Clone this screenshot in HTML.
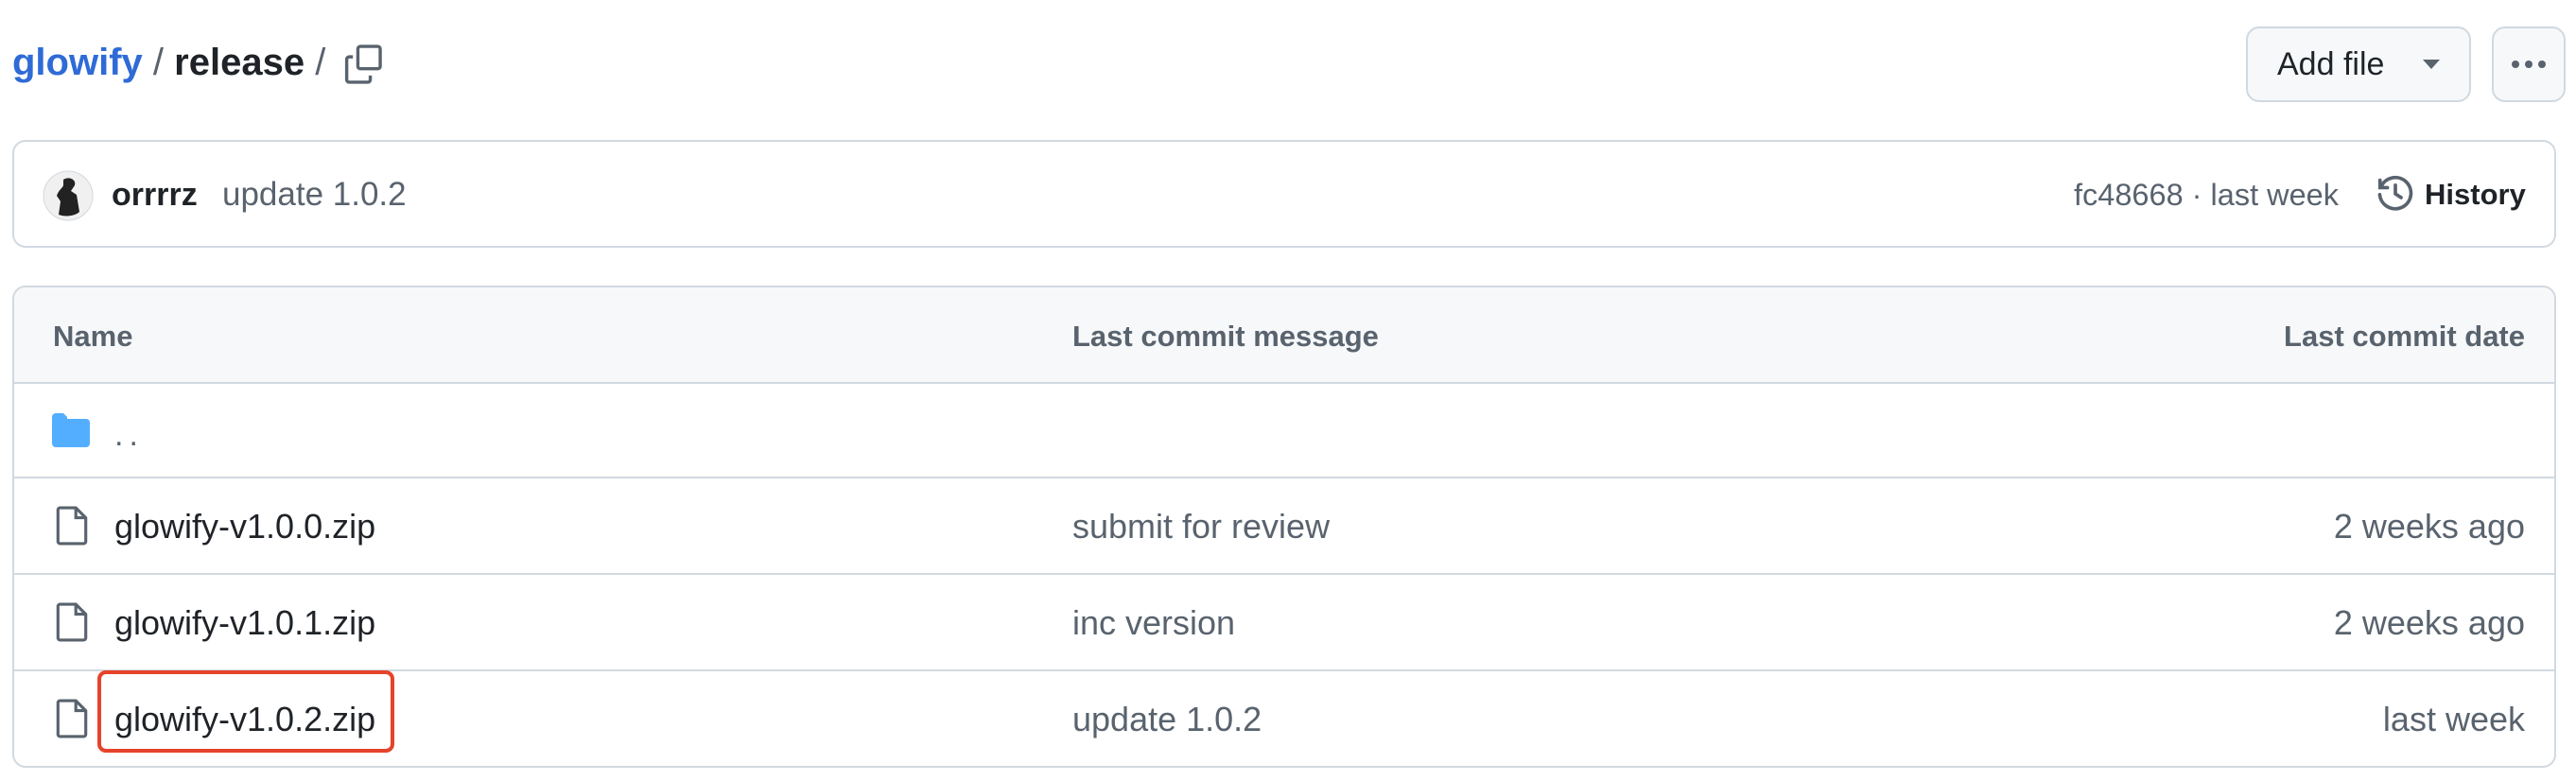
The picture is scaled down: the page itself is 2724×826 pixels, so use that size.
<!DOCTYPE html>
<html><head><meta charset="utf-8"><style>
html,body{margin:0;padding:0;background:#fff;width:2724px;height:826px;overflow:hidden;font-family:"Liberation Sans",sans-serif;}
.a{position:absolute;white-space:nowrap;}
.box{position:absolute;border:2px solid #d1d9e0;border-radius:14px;box-sizing:border-box;}
.hl{position:absolute;left:13px;width:2690px;height:2px;background:#d1d9e0;}
.t{font-size:36px;color:#1f2328;}
.m{font-size:36px;color:#59636e;}
.h{font-size:31px;font-weight:bold;color:#59636e;}
</style></head><body>
<div class="a" style="left:13px;top:40px;font-size:40px;font-weight:bold;line-height:52px;"><span style="color:#2f6bd6">glowify</span> <span style="color:#59636e;font-weight:normal">/</span> <span style="color:#1f2328">release</span> <span style="color:#59636e;font-weight:normal">/</span></div>
<svg class="a" style="left:364px;top:46px" width="42" height="44" viewBox="0 0 16 16" fill="none" stroke="#59636e" stroke-width="1.3"><rect x="5.5" y="0.8" width="9" height="9" rx="1"/><path d="M3.5 5H2a1 1 0 0 0-1 1v8.2a1 1 0 0 0 1 1h7.5a1 1 0 0 0 1-1V12.5"/></svg>

<div class="box" style="left:2375px;top:28px;width:238px;height:80px;background:#f6f8fa;border-radius:14px"></div>
<div class="a" style="left:2408px;top:48px;font-size:34px;color:#1f2328;line-height:40px">Add file</div>
<svg class="a" style="left:2562px;top:63px" width="18" height="10"><path d="M0 0h18L9 10z" fill="#59636e"/></svg>
<div class="box" style="left:2635px;top:28px;width:78px;height:80px;background:#f6f8fa;border-radius:14px"></div>
<svg class="a" style="left:2654px;top:62px" width="40" height="12"><circle cx="6" cy="6" r="4" fill="#59636e"/><circle cx="20" cy="6" r="4" fill="#59636e"/><circle cx="34" cy="6" r="4" fill="#59636e"/></svg>

<div class="box" style="left:13px;top:148px;width:2690px;height:114px"></div>
<svg class="a" style="left:45px;top:180px" width="54" height="54"><circle cx="27" cy="27" r="26" fill="#f0f0f0" stroke="#d1d9e0"/><path d="M22 10c6-4 14 0 12 6l-4 6 6 4 3 18c-4 4-14 6-22 3l2-14-4-6c2-6 6-8 7-11z" fill="#222"/></svg>
<div class="a" style="left:118px;top:186px;font-size:34px;font-weight:bold;color:#1f2328;line-height:40px">orrrrz</div>
<div class="a m" style="left:235px;top:186px;line-height:40px;font-size:35px">update 1.0.2</div>
<div class="a m" style="left:2193px;top:186px;line-height:40px;font-size:32.5px">fc48668 · last week</div>
<svg class="a" style="left:2512px;top:184px" width="42" height="42" viewBox="0 0 16 16" fill="none" stroke="#59636e" stroke-width="1.4" stroke-linecap="round"><path d="M2.2 5.2A6.3 6.3 0 1 1 1.7 8.3"/><path d="M1.8 2.5v3h3"/><path d="M8 4.5V8l2.3 1.5"/></svg>
<div class="a" style="left:2564px;top:186px;font-size:31px;font-weight:bold;color:#1f2328;line-height:40px">History</div>

<div class="box" style="left:13px;top:302px;width:2690px;height:510px;overflow:hidden"><div style="height:102px;background:#f6f8fa"></div></div>
<div class="hl" style="top:404px"></div>
<div class="hl" style="top:504px"></div>
<div class="hl" style="top:606px"></div>
<div class="hl" style="top:708px"></div>
<div class="a h" style="left:56px;top:338px;line-height:36px">Name</div>
<div class="a h" style="left:1134px;top:338px;line-height:36px">Last commit message</div>
<div class="a h" style="right:54px;top:338px;line-height:36px">Last commit date</div>

<svg class="a" style="left:55px;top:437px" width="40" height="36"><path d="M0 4a4 4 0 0 1 4-4h8l4 4v2h20a4 4 0 0 1 4 4v22a4 4 0 0 1-4 4H4a4 4 0 0 1-4-4z" fill="#54aeff"/></svg>
<div class="a" style="left:121px;top:440px;font-size:34px;color:#59636e;line-height:40px;letter-spacing:6px">..</div>

<svg class="a" style="left:59px;top:535px" width="34" height="42" viewBox="0 0 16 20" fill="none" stroke="#59636e" stroke-width="1.5"><path d="M2 1h8l5 5v12a1 1 0 0 1-1 1H2a1 1 0 0 1-1-1V2a1 1 0 0 1 1-1z"/><path d="M10 1v5h5"/></svg>
<div class="a t" style="left:121px;top:537px;line-height:40px">glowify-v1.0.0.zip</div>
<div class="a m" style="left:1134px;top:537px;line-height:40px">submit for review</div>
<div class="a m" style="right:54px;top:537px;line-height:40px">2 weeks ago</div>

<svg class="a" style="left:59px;top:637px" width="34" height="42" viewBox="0 0 16 20" fill="none" stroke="#59636e" stroke-width="1.5"><path d="M2 1h8l5 5v12a1 1 0 0 1-1 1H2a1 1 0 0 1-1-1V2a1 1 0 0 1 1-1z"/><path d="M10 1v5h5"/></svg>
<div class="a t" style="left:121px;top:639px;line-height:40px">glowify-v1.0.1.zip</div>
<div class="a m" style="left:1134px;top:639px;line-height:40px">inc version</div>
<div class="a m" style="right:54px;top:639px;line-height:40px">2 weeks ago</div>

<svg class="a" style="left:59px;top:739px" width="34" height="42" viewBox="0 0 16 20" fill="none" stroke="#59636e" stroke-width="1.5"><path d="M2 1h8l5 5v12a1 1 0 0 1-1 1H2a1 1 0 0 1-1-1V2a1 1 0 0 1 1-1z"/><path d="M10 1v5h5"/></svg>
<div class="a t" style="left:121px;top:741px;line-height:40px">glowify-v1.0.2.zip</div>
<div class="a m" style="left:1134px;top:741px;line-height:40px">update 1.0.2</div>
<div class="a m" style="right:54px;top:741px;line-height:40px">last week</div>
<div class="a" style="left:103px;top:709px;width:314px;height:87px;border:4px solid #e5432a;border-radius:9px;box-sizing:border-box"></div>
</body></html>
